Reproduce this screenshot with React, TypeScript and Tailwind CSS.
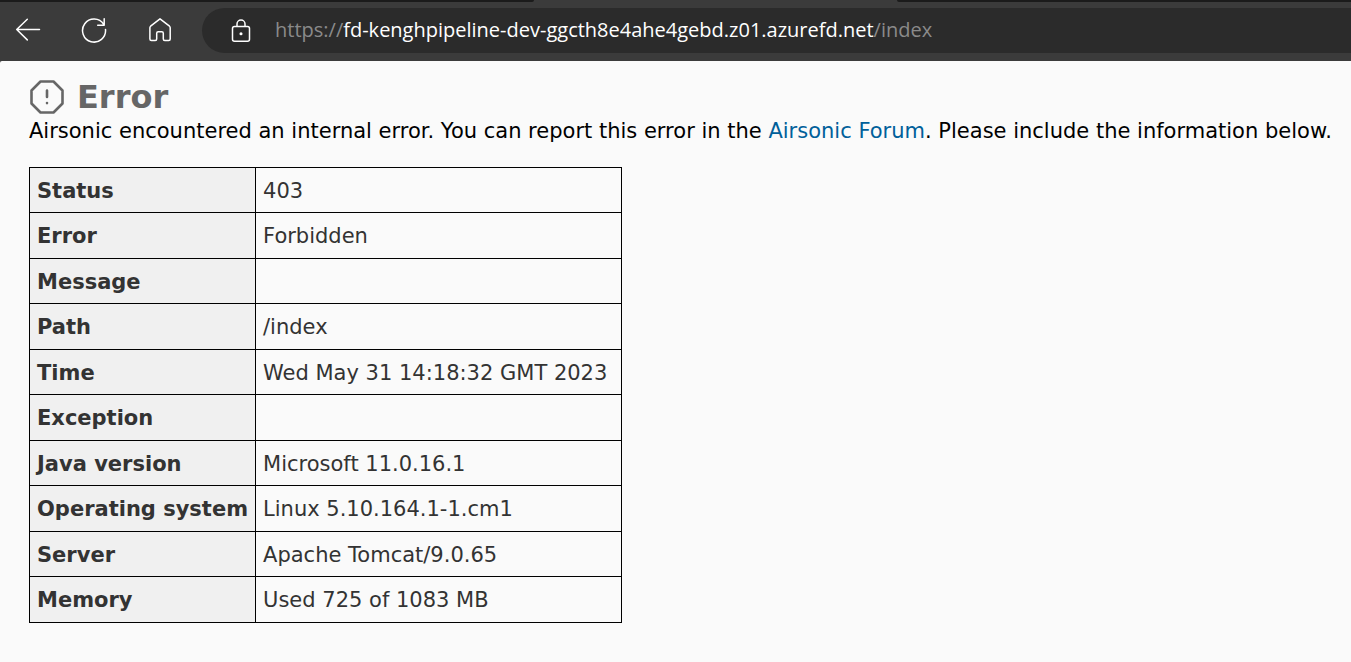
import { type ReactNode } from "react";

const details: [string, string][] = [
  ["Status", "403"],
  ["Error", "Forbidden"],
  ["Message", ""],
  ["Path", "/index"],
  ["Time", "Wed May 31 14:18:32 GMT 2023"],
  ["Exception", ""],
  ["Java version", "Microsoft 11.0.16.1"],
  ["Operating system", "Linux 5.10.164.1-1.cm1"],
  ["Server", "Apache Tomcat/9.0.65"],
  ["Memory", "Used 725 of 1083 MB"],
];

function ToolButton({ label, children }: { label: string; children: ReactNode }) {
  return (
    <button type="button" aria-label={label} className="size-7 text-white">
      <svg viewBox="0 0 28 28" className="size-7" fill="none" stroke="currentColor" strokeWidth="1.5" strokeLinecap="round" strokeLinejoin="round">
        {children}
      </svg>
    </button>
  );
}

function BrowserBar() {
  return (
    <header className="bg-[#3b3b3b]">
      <div className="flex h-[2px]">
        <div className="w-[534px] rounded-br-sm bg-[#1b1b1b]" />
        <div className="w-[363px]" />
        <div className="grow rounded-bl-sm bg-[#1b1b1b]" />
      </div>
      <div className="flex items-start pb-2 pl-[14px] pt-1.5">
        <div className="flex items-center gap-[38px] pt-2">
          <ToolButton label="Back">
            <path d="M25.500 13.500H2.700M13.300 3.300 2.700 13.500l10.600 10.400" />
          </ToolButton>
          <ToolButton label="Refresh">
            <path d="M25.500 13.400A11.500 11.500 0 1 1 23.700 8.300L24.200 9.300M24.200 2.800v6.500h-6.500" />
          </ToolButton>
          <ToolButton label="Home">
            <path d="M14 2.800 4.600 10.200Q3.900 10.800 3.900 11.700V23Q3.900 24.500 5.400 24.500H9.200Q10.700 24.500 10.700 23V17.200Q10.700 15.800 12.200 15.800H15.800Q17.300 15.800 17.300 17.200V23Q17.300 24.500 18.800 24.500H22.700Q24.200 24.500 24.200 23V11.700Q24.200 10.800 23.500 10.200Z" />
          </ToolButton>
        </div>
        <div className="ml-7 flex h-[45px] grow items-center rounded-l-full bg-[#2b2b2b] pl-[25px]">
          <svg viewBox="0 0 28 28" className="size-7 text-white" fill="none" stroke="currentColor" strokeWidth="1.5" strokeLinejoin="round">
            <rect x="5.500" y="9.500" width="17" height="14.800" rx="2" />
            <path d="M10 9.500V7a4 4 0 0 1 8 0v2.500" />
            <circle cx="14" cy="16.800" r="0.800" fill="currentColor" />
          </svg>
          <div className="ml-5 whitespace-nowrap pb-px font-['Open_Sans',sans-serif] text-[20px] leading-7 text-[#8a8a8a]">
            https://<span className="text-white">fd-kenghpipeline-dev-ggcth8e4ahe4gebd.z01.azurefd.net</span>/index
          </div>
        </div>
      </div>
    </header>
  );
}

export default function App() {
  return (
    <div className="min-h-screen bg-[#3b3b3b]">
      <BrowserBar />
      <main className="min-h-[calc(100vh-61px)] rounded-tl-xs bg-[#fafafa] pb-10 pl-[29px] pt-4 font-['DejaVu_Sans',sans-serif] text-[21px] leading-[26px] text-black">
        <h1 className="flex h-[39px] items-center gap-3 text-[32px] font-bold text-[#666]">
          <svg viewBox="0 0 36 36" className="size-9" fill="none" stroke="currentColor" strokeWidth="2.6" strokeLinecap="round" strokeLinejoin="round">
            <path d="M11.500 2.500h13l9 9v13l-9 9h-13l-9-9v-13zM18 11.500v6.500M18 24v.1" />
          </svg>
          Error
        </h1>
        <p className="whitespace-nowrap pt-0.5">
          Airsonic encountered an internal error. You can report this error in the{" "}
          <a href="#forum" className="text-[#00609a]">Airsonic Forum</a>. Please include the information below.
        </p>
        <table className="mt-[23px] w-[593px] border-collapse whitespace-nowrap text-[#333]">
          <tbody>
            {details.map(([name, value]) => (
              <tr key={name} className="h-[45px] even:h-[46px]">
                <th scope="row" className="w-[225px] border border-black bg-[#f0f0f0] px-[7px] pt-px text-left font-bold">{name}</th>
                <td className="border border-black px-[7px] pt-px">{value}</td>
              </tr>
            ))}
          </tbody>
        </table>
      </main>
    </div>
  );
}
